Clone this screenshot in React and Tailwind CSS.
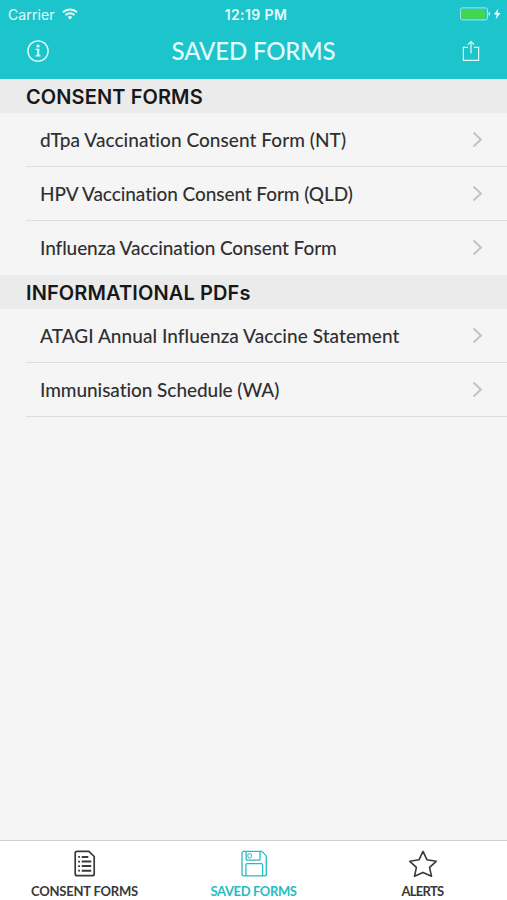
import { clsx } from "clsx";

const sections = [
	{
		title: "CONSENT FORMS",
		tracking: "tracking-[0.1px]",
		items: [
			{ label: "dTpa Vaccination Consent Form (NT)", tracking: "tracking-[0.06px]" },
			{ label: "HPV Vaccination Consent Form (QLD)", tracking: "tracking-[-0.07px]" },
			{ label: "Influenza Vaccination Consent Form", tracking: "tracking-[-0.09px]" },
		],
	},
	{
		title: "INFORMATIONAL PDFs",
		tracking: "tracking-[0.12px]",
		items: [
			{ label: "ATAGI Annual Influenza Vaccine Statement", tracking: "tracking-[0.06px]" },
			{ label: "Immunisation Schedule (WA)", tracking: "tracking-[-0.06px]" },
		],
	},
];

const tabs = [
	{ label: "CONSENT FORMS", icon: FormIcon, tracking: "tracking-[-0.2px]" },
	{ label: "SAVED FORMS", icon: DiskIcon, tracking: "tracking-[-0.38px]", active: true },
	{ label: "ALERTS", icon: StarIcon, tracking: "tracking-[-0.7px]" },
];

function WifiIcon() {
	return (
		<svg width="16" height="12" viewBox="0 0 16 12" fill="none" stroke="currentColor" strokeWidth="1.9">
			<path d="M1 4.4a10 10 0 0 1 14 0" />
			<path d="M3.5 7.1a6.4 6.4 0 0 1 9 0" />
			<path d="M8 11.6 5.6 9.1a3.4 3.4 0 0 1 4.8 0z" fill="currentColor" stroke="none" />
		</svg>
	);
}

function BatteryIcon() {
	return (
		<svg width="42" height="14" viewBox="0 0 42 14" fill="none">
			<rect x="0.6" y="0.9" width="26.8" height="12" rx="1.8" stroke="#a5eaed" strokeWidth="1" />
			<rect x="1.8" y="2.1" width="23.6" height="9.6" rx="0.8" fill="#43d651" />
			<path d="M28.6 5c1.8.3 1.8 3.5 0 3.8z" fill="#e0fafa" />
			<path d="M38.4 1.5 34 7.6h2.8l-1.3 4.9 5-6.6h-3z" fill="#fff" />
		</svg>
	);
}

function InfoIcon() {
	return (
		<svg width="24" height="24" viewBox="0 0 24 24" fill="none" stroke="currentColor">
			<circle cx="12" cy="12" r="10.1" strokeWidth="1.4" />
			<circle cx="12" cy="7" r="1.6" fill="currentColor" stroke="none" />
			<path d="M9.7 10.4h1.6M9.5 16.9h5" strokeWidth="1.4" />
			<path d="M12.2 9.7v7" strokeWidth="2.2" />
		</svg>
	);
}

function ShareIcon() {
	return (
		<svg width="18" height="22" viewBox="0 0 18 22" fill="none" stroke="currentColor" strokeWidth="1.2">
			<path d="M6 7.4H1.4v13h15.2v-13H12" />
			<path d="M9 13.6V1.8M5.9 4.7 9 1.6l3.1 3.1" />
		</svg>
	);
}

function ChevronIcon() {
	return (
		<svg width="11" height="17" viewBox="0 0 11 17" fill="none" stroke="#c3c3c7" strokeWidth="2">
			<path d="m1.5 1.5 7.4 7-7.4 7" />
		</svg>
	);
}

function FormIcon() {
	return (
		<svg width="28" height="28" viewBox="0 0 28 28" fill="none" stroke="currentColor">
			<path d="M6.2 1.3h11.6l5.4 5.2v17.2a2 2 0 0 1-2 2H6.2a2 2 0 0 1-2-2V3.3a2 2 0 0 1 2-2z" strokeWidth="1.7" />
			<path d="M10.7 6.9h6.6M10.7 11.6h9.5M10.7 16.1h9.5M10.7 20.7h9.5" strokeWidth="2" />
			<path d="M7.2 6.9h1.8M7.2 11.6h1.8M7.2 16.1h1.8M7.2 20.7h1.8" strokeWidth="1.7" />
		</svg>
	);
}

function DiskIcon() {
	return (
		<svg width="28" height="28" viewBox="0 0 28 28" fill="none" stroke="currentColor" strokeWidth="1.3">
			<path d="M3.7 1.4h18.1l4.5 4.5v18a2 2 0 0 1-2 2H3.7a1.7 1.7 0 0 1-1.7-1.7V3.1a1.7 1.7 0 0 1 1.7-1.7z" />
			<path d="M6.1 1.4v7.3a1.4 1.4 0 0 0 1.4 1.4h11.2a1.4 1.4 0 0 0 1.4-1.4V1.4" />
			<path d="M5.9 25.9v-11a1.2 1.2 0 0 1 1.2-1.2h14.3a1.2 1.2 0 0 1 1.2 1.2v11" />
			<rect x="7.9" y="3.7" width="3.5" height="4.2" rx="1.2" strokeWidth="1" />
		</svg>
	);
}

function StarIcon() {
	return (
		<svg width="30" height="28" viewBox="0 0 30 28" fill="none" stroke="currentColor" strokeWidth="1.6" strokeLinejoin="round">
			<path d="m15 1.4 3.9 8.3 9.3 1.6-6.6 6.1 1.9 8.9-8.5-3.9-8.5 3.9 1.9-8.9-6.6-6.1 9.3-1.6z" />
		</svg>
	);
}

export default function App() {
	return (
		<div className="flex h-[900px] w-full flex-col bg-[#f5f5f5] font-['Lato',sans-serif] text-[#303032]">
			<header className="h-[79px] bg-[#1cc4cb] text-[#e3fbfb]">
				<div className="grid h-[27px] grid-cols-3 items-center pt-px font-['Inter',sans-serif]">
					<div className="flex items-center gap-[7px] pl-2">
						<span className="text-[14px] tracking-[0.1px]">Carrier</span>
						<WifiIcon />
					</div>
					<span className="pl-[5px] text-center text-[14px] font-semibold tracking-[0.4px]">12:19 PM</span>
					<div className="flex justify-end pr-[5px]">
						<BatteryIcon />
					</div>
				</div>
				<div className="flex h-[48px] items-center justify-between pr-[27px] pl-[26px]">
					<button>
						<InfoIcon />
					</button>
					<h1 className="pr-[5px] text-[24px] font-medium tracking-[-0.15px]">SAVED FORMS</h1>
					<button>
						<ShareIcon />
					</button>
				</div>
			</header>

			<main className="flex-1">
				{sections.map((section, i) => (
					<section key={section.title}>
						<h2
							className={clsx(
								"flex h-[34px] items-center bg-[#ebebeb] pt-0.5 pl-[26px] font-['Inter',sans-serif] text-[20px] font-semibold text-[#18181a]",
								section.tracking,
							)}
						>
							{section.title}
						</h2>
						<ul>
							{section.items.map((item, j) => (
								<li
									key={item.label}
									className={clsx(
										"ml-[26px] flex h-[54px] items-center justify-between border-b pr-[24px] pl-[14px]",
										i === 0 && j === section.items.length - 1 ? "border-transparent" : "border-[#dedee0]",
									)}
								>
									<span className={clsx("pt-0.5 text-[19px] font-medium", item.tracking)}>{item.label}</span>
									<ChevronIcon />
								</li>
							))}
						</ul>
					</section>
				))}
			</main>

			<nav className="grid h-[60px] grid-cols-3 border-t border-[#cfcfcf] bg-white">
				{tabs.map(({ label, icon: Icon, tracking, active }) => (
					<button
						key={label}
						className={clsx("flex flex-col items-center pt-[9px]", active ? "text-[#27bcc2]" : "text-[#39393b]")}
					>
						<Icon />
						<span className={clsx("mt-[4px] text-[13px] leading-[18px] font-bold", tracking)}>{label}</span>
					</button>
				))}
			</nav>
		</div>
	);
}
